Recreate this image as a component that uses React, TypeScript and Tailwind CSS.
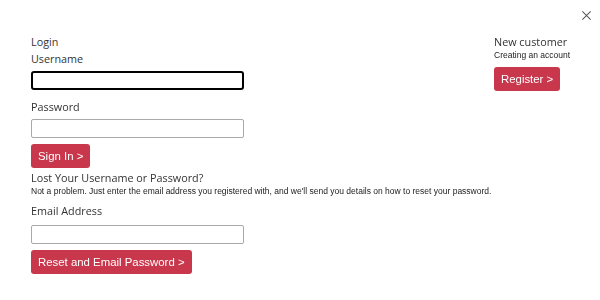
export default function App() {
  const heading = "font-['Open_Sans',sans-serif] text-[10.8px] leading-[17px] text-[#333]";
  const input =
    "block w-[213px] h-[19px] border border-[#a9a9a9] rounded-[2px] bg-white outline-none";
  const button =
    "block bg-[#c8374b] text-white font-['Liberation_Sans',Arial,sans-serif] text-[11.4px] leading-[24px] h-[24px] px-[7px] rounded-[3px]";
  const small =
    "font-['Liberation_Sans',Arial,sans-serif] text-[8.5px] leading-[10px] text-[#222] whitespace-nowrap";

  return (
    <div className="relative w-[600px] h-[300px] bg-white">
      {/* close */}
      <button className="absolute right-[8px] top-[10px] w-[11px] h-[11px] text-[#555]">
        <svg viewBox="0 0 12 12" width="11" height="11" stroke="currentColor" strokeWidth="1.1">
          <path d="M1.5 1.5 L10.5 10.5 M10.5 1.5 L1.5 10.5" />
        </svg>
      </button>

      <div className="flex pl-[31px] pt-[33px]">
        {/* login column */}
        <div className="w-[463px]">
          <div className={heading}>Login</div>
          <div className={heading}>Username</div>
          <input
            className={`${input} mt-[4px] border-[2px] border-black rounded-[3px]`}
            autoFocus
          />
          <div className={`${heading} mt-[8px]`}>Password</div>
          <input className={`${input} mt-[4px]`} />
          <button className={`${button} mt-[6px]`}>Sign In &gt;</button>
          <div className={`${heading} mt-[1px]`}>Lost Your Username or Password?</div>
          <p className={small}>
            Not a problem. Just enter the email address you registered with, and we'll send you details on how to reset your password.
          </p>
          <div className={`${heading} mt-[6px]`}>Email Address</div>
          <input className={`${input} mt-[6px]`} />
          <button className={`${button} mt-[6px]`}>Reset and Email Password &gt;</button>
        </div>

        {/* register column */}
        <div>
          <div className={heading}>New customer</div>
          <div className={`${small} leading-[9px]`}>Creating an account</div>
          <button className={`${button} mt-[7px]`}>Register &gt;</button>
        </div>
      </div>
    </div>
  );
}
